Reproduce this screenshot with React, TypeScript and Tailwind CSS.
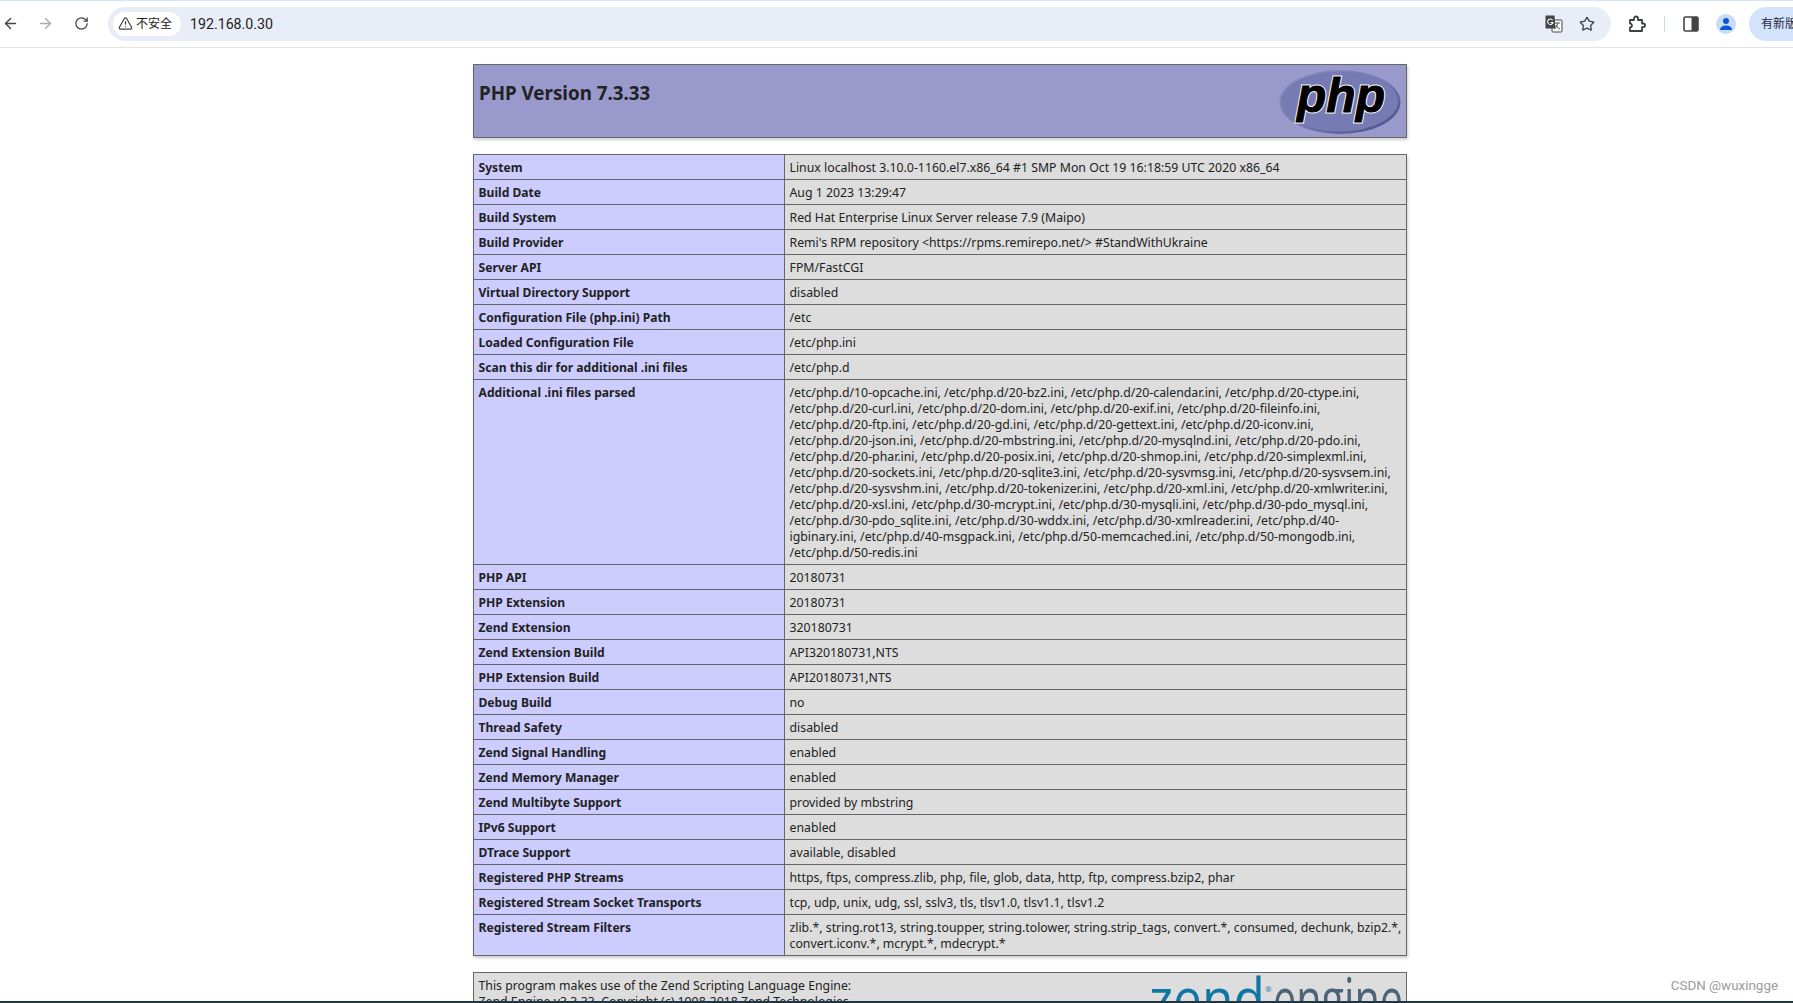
import { ArrowLeft, ArrowRight, RotateCw, Star, TriangleAlert } from "lucide-react";

const ini = [
  "/etc/php.d/10-opcache.ini, /etc/php.d/20-bz2.ini, /etc/php.d/20-calendar.ini, /etc/php.d/20-ctype.ini,",
  "/etc/php.d/20-curl.ini, /etc/php.d/20-dom.ini, /etc/php.d/20-exif.ini, /etc/php.d/20-fileinfo.ini,",
  "/etc/php.d/20-ftp.ini, /etc/php.d/20-gd.ini, /etc/php.d/20-gettext.ini, /etc/php.d/20-iconv.ini,",
  "/etc/php.d/20-json.ini, /etc/php.d/20-mbstring.ini, /etc/php.d/20-mysqlnd.ini, /etc/php.d/20-pdo.ini,",
  "/etc/php.d/20-phar.ini, /etc/php.d/20-posix.ini, /etc/php.d/20-shmop.ini, /etc/php.d/20-simplexml.ini,",
  "/etc/php.d/20-sockets.ini, /etc/php.d/20-sqlite3.ini, /etc/php.d/20-sysvmsg.ini, /etc/php.d/20-sysvsem.ini,",
  "/etc/php.d/20-sysvshm.ini, /etc/php.d/20-tokenizer.ini, /etc/php.d/20-xml.ini, /etc/php.d/20-xmlwriter.ini,",
  "/etc/php.d/20-xsl.ini, /etc/php.d/30-mcrypt.ini, /etc/php.d/30-mysqli.ini, /etc/php.d/30-pdo_mysql.ini,",
  "/etc/php.d/30-pdo_sqlite.ini, /etc/php.d/30-wddx.ini, /etc/php.d/30-xmlreader.ini, /etc/php.d/40-",
  "igbinary.ini, /etc/php.d/40-msgpack.ini, /etc/php.d/50-memcached.ini, /etc/php.d/50-mongodb.ini,",
  "/etc/php.d/50-redis.ini",
];

const rows: [string, string[]][] = [
  ["System", ["Linux localhost 3.10.0-1160.el7.x86_64 #1 SMP Mon Oct 19 16:18:59 UTC 2020 x86_64"]],
  ["Build Date", ["Aug 1 2023 13:29:47"]],
  ["Build System", ["Red Hat Enterprise Linux Server release 7.9 (Maipo)"]],
  ["Build Provider", ["Remi's RPM repository <https://rpms.remirepo.net/> #StandWithUkraine"]],
  ["Server API", ["FPM/FastCGI"]],
  ["Virtual Directory Support", ["disabled"]],
  ["Configuration File (php.ini) Path", ["/etc"]],
  ["Loaded Configuration File", ["/etc/php.ini"]],
  ["Scan this dir for additional .ini files", ["/etc/php.d"]],
  ["Additional .ini files parsed", ini],
  ["PHP API", ["20180731"]],
  ["PHP Extension", ["20180731"]],
  ["Zend Extension", ["320180731"]],
  ["Zend Extension Build", ["API320180731,NTS"]],
  ["PHP Extension Build", ["API20180731,NTS"]],
  ["Debug Build", ["no"]],
  ["Thread Safety", ["disabled"]],
  ["Zend Signal Handling", ["enabled"]],
  ["Zend Memory Manager", ["enabled"]],
  ["Zend Multibyte Support", ["provided by mbstring"]],
  ["IPv6 Support", ["enabled"]],
  ["DTrace Support", ["available, disabled"]],
  ["Registered PHP Streams", ["https, ftps, compress.zlib, php, file, glob, data, http, ftp, compress.bzip2, phar"]],
  ["Registered Stream Socket Transports", ["tcp, udp, unix, udg, ssl, sslv3, tls, tlsv1.0, tlsv1.1, tlsv1.2"]],
  [
    "Registered Stream Filters",
    [
      "zlib.*, string.rot13, string.toupper, string.tolower, string.strip_tags, convert.*, consumed, dechunk, bzip2.*,",
      "convert.iconv.*, mcrypt.*, mdecrypt.*",
    ],
  ],
];

function PhpLogo() {
  const letters = {
    x: 20,
    y: 44,
    fontFamily: "'Liberation Sans', sans-serif",
    fontWeight: 700,
    fontStyle: "italic",
    fontSize: 48,
    textLength: 88,
    lengthAdjust: "spacingAndGlyphs" as const,
  };
  return (
    <svg width="126" height="68" viewBox="0 0 126 68" className="shrink-0">
      <defs>
        <linearGradient id="phpEdge" x1="0" y1="0" x2="1" y2="1">
          <stop offset="0" stopColor="#8f93c4" />
          <stop offset="0.55" stopColor="#7377ad" />
          <stop offset="1" stopColor="#3f4a80" />
        </linearGradient>
      </defs>
      <ellipse cx="63" cy="34" rx="60.5" ry="32" fill="url(#phpEdge)" />
      <ellipse cx="62.5" cy="33.5" rx="58.5" ry="30" fill="#777bb3" />
      <text {...letters} fill="#fff" stroke="#fff" strokeWidth="3">
        php
      </text>
      <text {...letters} fill="#000" stroke="#000" strokeWidth="1">
        php
      </text>
    </svg>
  );
}

function ZendLogo() {
  return (
    <svg width="256" height="58" viewBox="0 0 256 58" className="shrink-0">
      <text x="0" y="50" fontFamily="'Open Sans', sans-serif" fontWeight="500" fontSize="58" textLength="116" lengthAdjust="spacingAndGlyphs" fill="#0f77a3">
        zend
      </text>
      <text x="116" y="22" fontFamily="'Open Sans', sans-serif" fontSize="8" fill="#0f77a3">
        ®
      </text>
      <text x="124" y="50" fontFamily="'Open Sans', sans-serif" fontWeight="400" fontSize="58" textLength="130" lengthAdjust="spacingAndGlyphs" fill="#4d6377">
        engine
      </text>
    </svg>
  );
}

function TranslateIcon() {
  return (
    <svg width="18" height="18" viewBox="0 0 18 18">
      <rect x="7" y="5" width="10" height="12" rx="1" fill="#fff" stroke="#444" strokeWidth="1" />
      <path d="M10 8h5M12.5 8c0 3-1.5 5-3 6M11 10c.8 2 2.5 3.5 4 4" fill="none" stroke="#444" strokeWidth="0.9" />
      <path d="M1.5 0.5h8l1 13h-9.500a0.500 0.500 0 0 1-0.500-0.500v-12a0.500 0.500 0 0 1 0.500-0.500z" fill="#444" />
      <path d="M7.600 5.200a2.700 2.700 0 1 0 0.400 2.300h-2.400" fill="none" stroke="#fff" strokeWidth="1.100" />
    </svg>
  );
}

function PuzzleIcon() {
  return (
    <svg width="18" height="18" viewBox="0 0 18 18" fill="none" stroke="#3c4043" strokeWidth="1.800" strokeLinejoin="round">
      <path d="M2 5h4V3.500a2 2 0 0 1 4 0V5h4v3.500h1.200a1.800 1.800 0 0 1 0 3.600H14V16H2v-3.500a2 2 0 0 0 0-4z" />
    </svg>
  );
}

function SidePanelIcon() {
  return (
    <svg width="16" height="16" viewBox="0 0 16 16">
      <rect x="1" y="1" width="14" height="14" rx="1.500" fill="#fff" stroke="#444" strokeWidth="1.600" />
      <rect x="8.500" y="1" width="6.500" height="14" fill="#444" />
    </svg>
  );
}

function ProfileIcon() {
  return (
    <div className="flex h-5 w-5 items-center justify-center rounded-full bg-[#c9dcf7]">
      <svg width="14" height="14" viewBox="0 0 14 14" fill="#0b57d0">
        <circle cx="7" cy="4" r="3" />
        <path d="M1 13c0-3 2.500-4.500 6-4.500s6 1.500 6 4.500z" />
      </svg>
    </div>
  );
}

function Toolbar() {
  return (
    <header className="flex h-[47px] items-center border-b border-[#e2e2e2] bg-white pb-px font-['Roboto','Noto_Sans_CJK_SC',sans-serif]">
      <div className="flex w-[108px] shrink-0 items-center pl-[2px]">
        <ArrowLeft size={17} strokeWidth={2} className="text-[#444]" />
        <ArrowRight size={17} strokeWidth={2} className="ml-[18px] text-[#aaa]" />
        <RotateCw size={15} strokeWidth={2} className="ml-[20px] text-[#444]" />
      </div>
      <div className="flex h-[34px] w-[1503px] shrink-0 items-center rounded-full bg-[#e9edf7] pl-[5px] pr-[16px]">
        <div className="flex h-[24px] w-[68px] items-center rounded-full bg-white pl-[5px] text-[12px] text-[#222]">
          <TriangleAlert size={15} strokeWidth={2} className="text-[#444]" />
          <span className="ml-[3px]">不安全</span>
        </div>
        <span className="ml-[9px] text-[14.2px] text-[#222]">192.168.0.30</span>
        <div className="ml-auto flex items-center gap-[16px]">
          <TranslateIcon />
          <Star size={16} strokeWidth={2} className="text-[#444]" />
        </div>
      </div>
      <div className="ml-[17px] flex items-center">
        <PuzzleIcon />
        <div className="ml-[18px] h-[16px] w-px bg-[#c8d9f0]" />
        <div className="ml-[18px]"><SidePanelIcon /></div>
        <div className="ml-[17px]"><ProfileIcon /></div>
      </div>
      <div className="ml-[13px] flex h-[34px] flex-1 items-center overflow-hidden rounded-l-full bg-[#d3e3fd] pl-[12px] text-[12px] whitespace-nowrap text-[#1f2937]">
        有新版本
      </div>
    </header>
  );
}

export default function App() {
  return (
    <div className="relative h-[1003px] w-[1793px] overflow-hidden bg-white font-['Noto_Sans','Noto_Sans_CJK_SC',sans-serif] text-[12.3px] leading-[16px] text-[#222]">
      <div className="h-px bg-[#d3e3fd]" />
      <Toolbar />
      <main className="ml-[473px] w-[934px] pt-[16px]">
        <div className="flex h-[74px] items-start justify-between border border-[#666] bg-[#9999cc] pl-[5px] pr-[3px] shadow-[1px_2px_3px_#ccc]">
          <h1 className="mt-[14px] text-[18.75px] leading-[28px] font-bold">PHP Version 7.3.33</h1>
          <div className="mt-[3px]"><PhpLogo /></div>
        </div>

        <table className="mt-[16px] w-[934px] table-fixed border-collapse shadow-[1px_2px_3px_#ccc]">
          <colgroup>
            <col className="w-[311px]" />
            <col />
          </colgroup>
          <tbody>
            {rows.map(([label, lines]) => (
              <tr key={label}>
                <td className="border border-[#666] bg-[#ccccff] pt-[5px] pr-[5px] pb-[3px] pl-[4.5px] align-top text-[12.12px] font-bold">{label}</td>
                <td className="border border-[#666] bg-[#dddddd] pt-[5px] pr-[5px] pb-[3px] pl-[4.5px] align-top whitespace-nowrap">
                  {lines.map((line) => (
                    <div key={line}>{line}</div>
                  ))}
                </td>
              </tr>
            ))}
          </tbody>
        </table>

        <div className="mt-[16px] flex h-[80px] items-start justify-between border border-[#666] bg-[#dddddd] pr-[1px] pl-[4.5px] pt-[5px]">
          <div>
            <div>This program makes use of the Zend Scripting Language Engine:</div>
            <div>Zend Engine v3.3.33, Copyright (c) 1998-2018 Zend Technologies</div>
          </div>
          <div className="-mt-[8px]"><ZendLogo /></div>
        </div>
      </main>
      <div className="absolute right-[15px] bottom-[9px] font-['Roboto',sans-serif] text-[13.4px] text-[#9a9a9a]">CSDN @wuxingge</div>
      <div className="absolute inset-x-0 bottom-0 h-[2px] bg-[#223641]" />
    </div>
  );
}
